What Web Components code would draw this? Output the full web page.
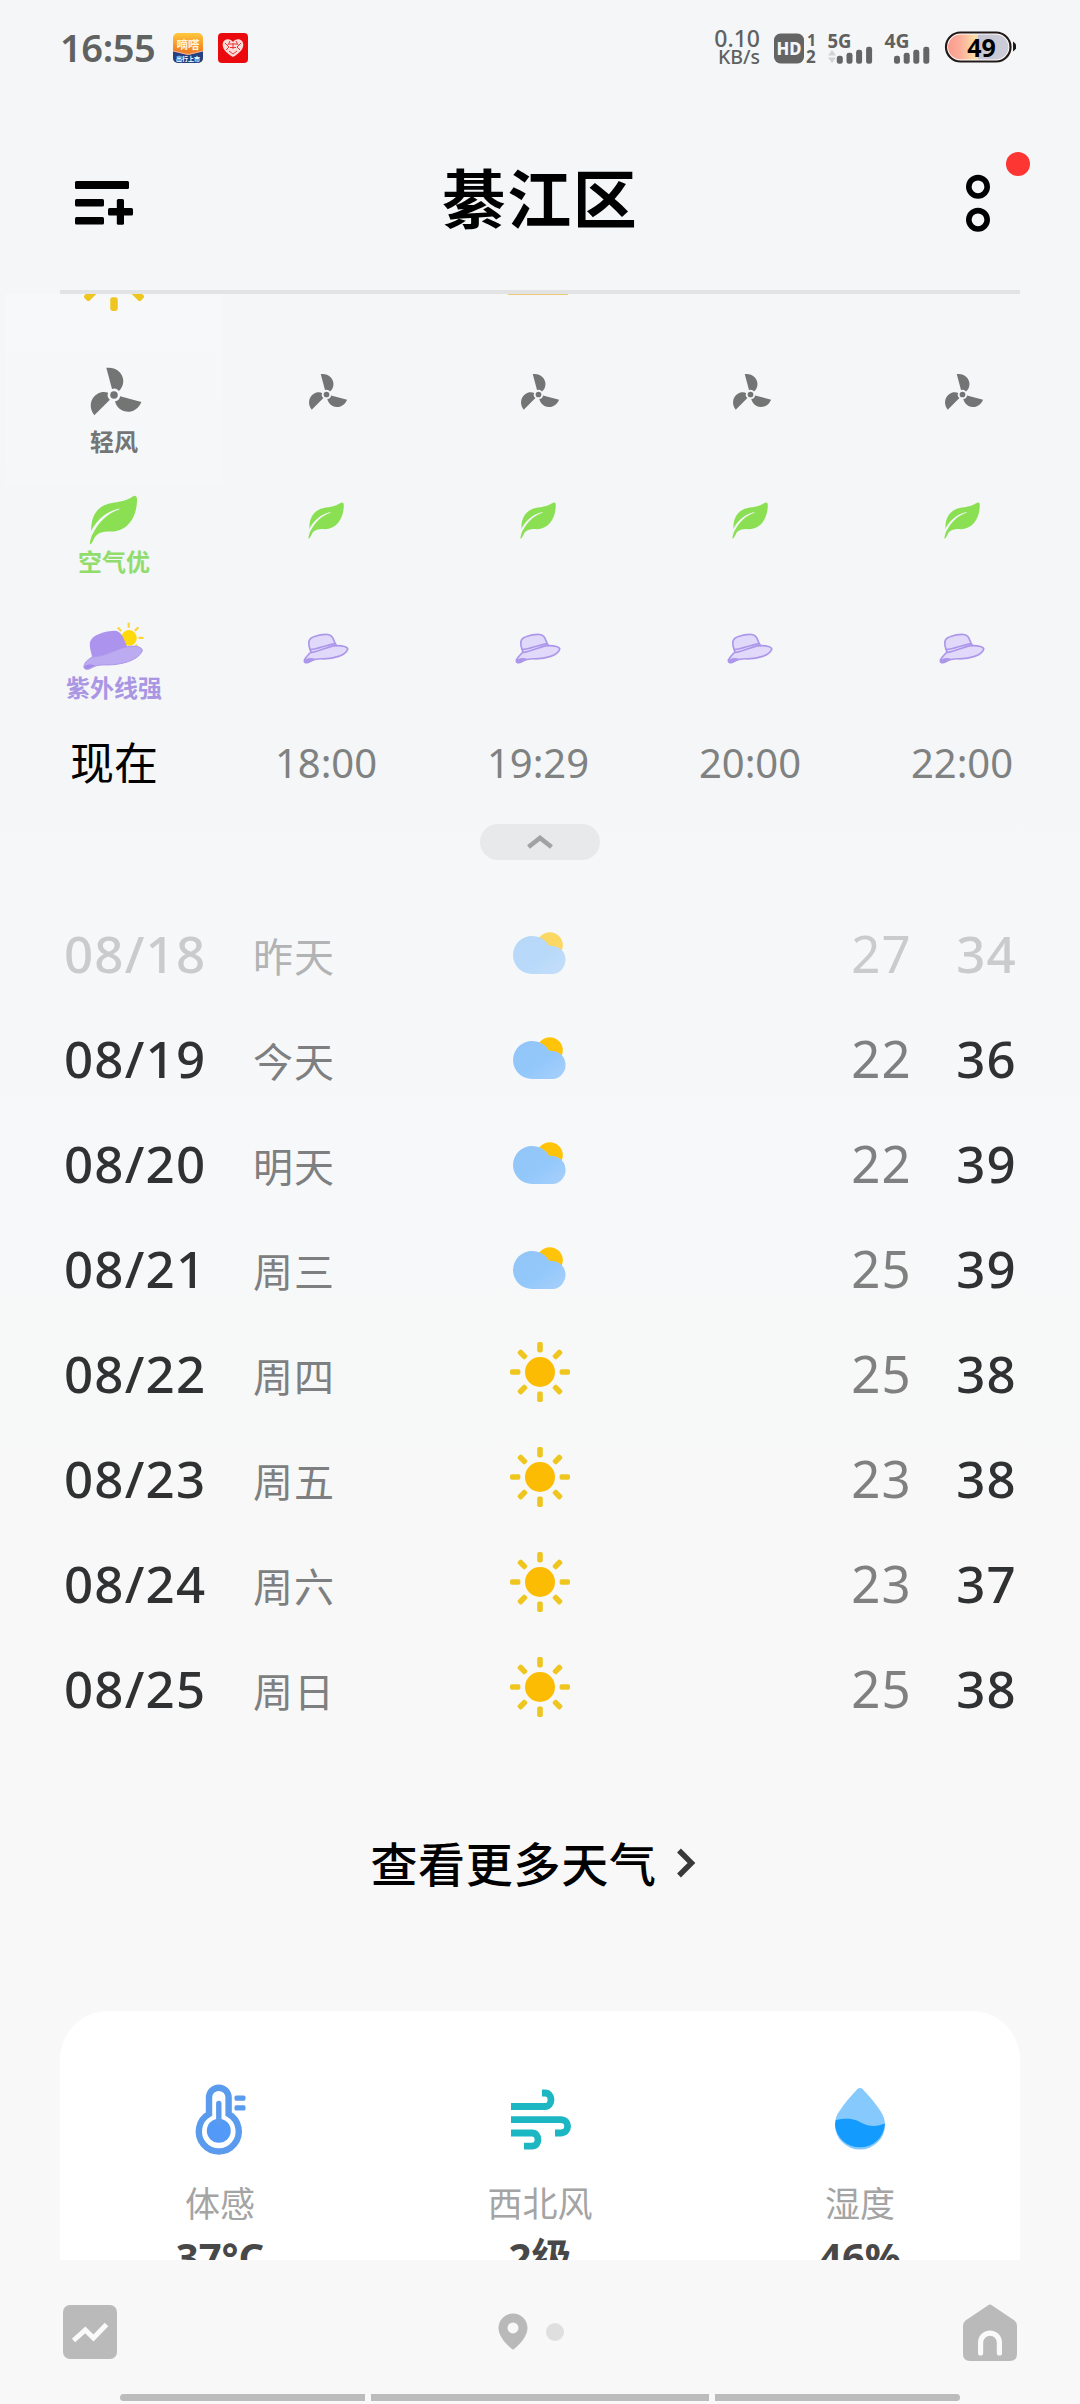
<!DOCTYPE html>
<html lang="zh-CN">
<head>
<meta charset="UTF-8">
<meta name="viewport" content="width=device-width, initial-scale=1.0">
<title>綦江区</title>
<style>
  html, body { margin: 0; padding: 0; }
  body {
    width: 1080px;
    height: 2404px;
    overflow: hidden;
    background: linear-gradient(180deg, #f4f6f8 0, #f4f6f8 820px, #f6f7f9 840px, #f7f8f9 1200px, #f8f8f8 1500px, #f8f8f8 100%);
    font-family: "Noto Sans", "Noto Sans CJK SC", sans-serif;
    color: #000;
  }
</style>
</head>
<body>
<weather-app></weather-app>

<script>
const BLADE = 'M-7.7 -27.2C2 -28.5 9.3 -22 9.3 -14C9.3 -9.5 7.3 -6.2 4.8 -4A5.9 5.9 0 0 0 -2 -5.9Z';

// All icons live here, keyed by name
const ICONS = {
  fan: `<svg viewBox="-30 -30 60 60"><g fill="#737575">
    <circle r="3.8"/>
    <path d="${BLADE}"/>
    <path transform="rotate(120)" d="${BLADE}"/>
    <path transform="rotate(240)" d="${BLADE}"/>
  </g></svg>`,
  leaf: `<svg viewBox="-5 -5 60 60">
    <path fill="#8ae052" d="M47 1.2Q48.3 2.5 48 6C47.5 24 37 37 22 36.5C13 36.4 9 38 6 42C4 45 3.5 48.2 1.5 49.3L.8 48.4C1.5 44 2.6 41 3.6 38.5L2.2 36C1.8 20 9 10 24 7.8C35 6.3 39 4.5 43 2Q45.8 .2 47 1.2Z"/>
    <path fill="#f4f6f8" d="M30.3 13.6L30.3 14.5C19 18 10 26.5 3.4 39.4L2 36C9 23.5 18 16.5 30.3 13.6Z"/>
  </svg>`,
  hat: `<svg viewBox="-7.5 -16.3 60 60"><g fill="#e1d9fa" stroke="#ad97ea" stroke-width="1.7" stroke-linejoin="round" stroke-linecap="round">
    <path d="M7.5 18.5C3.5 9 5 5 11 3.2C16 1.5 20 1 24 1.2C31 2 29.5 8.5 33 12.3C39 12.2 44.5 13.5 44.2 16C42 22.5 30 25.3 20.5 25.5C14 25.2 10.5 25.5 6 28.5C3.5 30.2 .2 29.6 1 26.6C2 23.8 5 21.5 7.5 18.5Z"/>
    <path fill="none" d="M6.7 16.2C15 15.8 22 11.5 31.5 10.5M7.5 19.2C16 18 24 13 33 12.3"/>
    <path fill="#ad97ea" d="M2 26.8C4 25.3 7 25.2 10 25.8L5 28.7C3 29.5 1 28.8 2 26.8Z"/>
  </g></svg>`,
  hatSun: `<svg viewBox="1 -5.5 60 60">
    <path fill="none" stroke="#fbd53c" stroke-width="2.2" d="M45.7 .3V5.2M34.8 5L38.2 8.6M51.8 8.4L55.5 4.7M55.5 15.3H60.5M52.5 22.3L54.5 24.6"/>
    <circle cx="46" cy="15.4" r="7.8" fill="#ffd90c"/>
    <path fill="#ab93ee" d="M9 35C9 31 6.8 28 6.8 21.5C7 13.5 19 9 31 8.2C39 8.4 40 15 44.4 24.5L32 32Z"/>
    <path fill="#bdabf2" stroke="#ae98ea" stroke-width="1" d="M1 43.5C1.5 39.5 5.5 36.5 9.5 34.5C25 33.5 36 24.3 49 23.6C56 23.6 59.5 25.5 59.3 28.5C55 38 39 42.3 24 42.5C17 42.1 12.5 42.8 7.5 46C4 47.6 .3 47 1 43.5Z"/>
    <path fill="#a58be8" d="M1.5 43.8C4 41.8 8 41.5 12 42.8L7 45.6C4 47 1.2 46.5 1.5 43.8Z"/>
  </svg>`,
  sun: `<svg viewBox="-30 -30 60 60">
    <circle r="15" fill="#fdbc04"/>
    <g fill="#eec61f">${[0, 45, 90, 135, 180, 225, 270, 315].map(a =>
      `<rect x="-2.8" y="-30" width="5.6" height="10.4" rx="1.8" transform="rotate(${a})"/>`).join('')}</g>
  </svg>`,
  cloud: `<svg viewBox="-27 -27 54 54">
    <defs><linearGradient id="c" x1="0" y1="0" x2="1" y2="1"><stop offset="0" stop-color="#93c5f7"/><stop offset=".55" stop-color="#93c8fb"/><stop offset="1" stop-color="#a8d0fb"/></linearGradient></defs>
    <circle cx="9.8" cy="-9.8" r="13" fill="#ffc40a"/>
    <path fill="url(#c)" d="M-8 -19C-.5 -19 6 -15 9.3 -9.1A13.6 13.6 0 0 1 13.4 19H-8A19 19 0 0 1 -8 -19Z"/>
  </svg>`,
  therm: `<svg width="50" height="72" viewBox="0 0 50 72">
    <path fill="none" stroke="#5b9bee" stroke-width="6.4" d="M14 31V14.5a9.8 9.8 0 0 1 19.6 0V31A20 20 0 1 1 14 31Z"/>
    <circle cx="23.8" cy="47.8" r="12" fill="#5299f8"/>
    <path stroke="#5b9bee" stroke-width="5.4" stroke-linecap="round" d="M23.8 20.5V40"/>
    <g fill="#5b9bee"><rect x="39.5" y="12.5" width="11" height="5.2" rx="1.6"/><rect x="39.5" y="22.3" width="11" height="5.2" rx="1.6"/></g>
  </svg>`,
  wind: `<svg width="60" height="62" viewBox="0 0 60 62"><path fill="none" stroke="#1cb7c3" stroke-width="6.8" stroke-linejoin="round"
    d="M1 18.5H35C43 18.5 43 5 35 5H32M1 31.6H50.5C60 31.6 60 45 50.5 45H45M1 45H22C30 45 30 58.2 22 58.2H14"/></svg>`,
  drop: `<svg width="52" height="64" viewBox="0 0 52 64">
    <path fill="#86c9fd" d="M23.7 1.8Q26 .2 28.3 1.8C36 10 42 17 46.5 24A25 25 0 0 1 51 38A25 24.5 0 0 1 1 38C1 32 2.5 28 5.5 24C10 17 16 10 23.7 1.8Z"/>
    <path fill="#139bfe" d="M1.8 33C10 31.3 17 31 23 33.6C31 38 38 41.5 50.8 36.5V38A25 24.5 0 0 1 1 38Z"/>
  </svg>`,
  menu: `<svg width="60" height="46" viewBox="0 0 60 46"><g fill="#000">
    <rect x="0" y="1" width="54" height="8" rx="1.5"/><rect x="0" y="19" width="29" height="7.6" rx="1.5"/><rect x="0" y="37" width="29" height="7.6" rx="1.5"/>
    <rect x="33" y="28" width="25" height="7.6" rx="1.5"/><rect x="41.8" y="19" width="7.2" height="25.8" rx="1.5"/>
  </g></svg>`,
  dots: `<svg width="26" height="60" viewBox="0 0 26 60"><g fill="none" stroke="#000" stroke-width="5.6"><circle cx="13" cy="12.8" r="9.2"/><circle cx="13" cy="45.8" r="9.2"/></g></svg>`,
  trend: `<svg width="54" height="54" viewBox="0 0 54 54"><rect width="54" height="54" rx="7" fill="#bababa"/><path d="M10.5 35.5L22.3 25L30.5 33L43.5 19.5" fill="none" stroke="#fafafa" stroke-width="5"/></svg>`,
  pin: `<svg width="30" height="38" viewBox="0 0 30 38"><path fill="#b9b9b9" fill-rule="evenodd" d="M15 .5A14.5 14.5 0 0 1 29.5 15C29.5 23 22 31.5 15 36.8C8 31.5 .5 23 .5 15A14.5 14.5 0 0 1 15 .5ZM15 9.4a5.5 5.5 0 1 0 0 11a5.5 5.5 0 1 0 0-11Z"/></svg>`,
  home: `<svg width="54" height="57" viewBox="0 0 54 57"><path fill="#bababa" d="M25.2 1.2Q27 -.2 28.8 1.2L51.5 16.5Q54 18.5 54 22V50Q54 57 47 57H7Q0 57 0 50V22Q0 18.5 2.5 16.5Z"/><path d="M17.6 49V38.5a9.4 9.4 0 0 1 18.8 0V49" fill="none" stroke="#fafafa" stroke-width="5.2" stroke-linecap="round"/></svg>`
};

class WeatherIcon extends HTMLElement {
  connectedCallback() {
    this.attachShadow({ mode: 'open' }).innerHTML = `
      <style>
        :host { display: block; line-height: 0; flex: none; }
        svg { display: block; overflow: visible; }
        svg:not([width]) { width: 100%; height: 100%; }
      </style>${ICONS[this.getAttribute('name')]}`;
  }
}
customElements.define('weather-icon', WeatherIcon);

class StatusBar extends HTMLElement {
  connectedCallback() {
    const bars = `<g fill="#656565"><rect x="0" y="9" width="6" height="8" rx="2.4"/><rect x="9.7" y="6" width="6" height="11" rx="2.4"/><rect x="19.3" y="3" width="6" height="14" rx="2.4"/><rect x="29.3" y="0" width="6" height="17" rx="2.4"/></g>`;
    this.attachShadow({ mode: 'open' }).innerHTML = `
      <style>
        :host { display: flex; align-items: center; height: 96px; padding: 0 64px 0 60px; box-sizing: border-box; color: #606262; }
        .time { font-size: 38px; font-weight: 600; line-height: 40px; width: 113px; letter-spacing: -.4px; white-space: nowrap; padding-bottom: 3px; }
        .apps { display: flex; gap: 15px; }
        .right { margin-left: auto; display: flex; align-items: center; }
        .speed { width: 46px; text-align: right; font-weight: 500; white-space: nowrap; }
        .speed div { font-size: 23px; line-height: 18px; }
        .speed div + div { font-size: 19.5px; line-height: 20px; }
        svg { display: block; }
        text { font-family: "Noto Sans", "Noto Sans CJK SC", sans-serif; }
      </style>
      <div class="time">16:55</div>
      <div class="apps">
        <svg width="30" height="30" viewBox="0 0 30 30">
          <defs><linearGradient id="o" x1="0" y1="0" x2="0" y2="1"><stop offset="0" stop-color="#ffc83e"/><stop offset=".6" stop-color="#f08023"/></linearGradient>
          <clipPath id="k"><rect width="30" height="30" rx="5"/></clipPath></defs>
          <g clip-path="url(#k)"><rect width="30" height="30" fill="url(#o)"/>
          <path d="M0 18L15 22L30 18V30H0Z" fill="#24407f"/><path d="M0 18L15 21.5L30 18" fill="none" stroke="#f4b2a0" stroke-width="1.2"/>
          <text x="15" y="16" text-anchor="middle" font-size="11.5" font-weight="700" fill="#fff4d8">嘀嗒</text>
          <text x="15" y="28.2" text-anchor="middle" font-size="6" font-weight="700" fill="#fff">出行上市</text></g>
        </svg>
        <svg width="30" height="30" viewBox="0 0 30 30">
          <rect width="30" height="30" rx="4" fill="#ea0a0d"/>
          <path d="M15 24C9 20.5 4.5 16.5 4.7 11.5C5 6 12 4.5 15 9C18 4.5 25 6 25.3 11.5C25.5 16.5 21 20.5 15 24Z" fill="#fbdcd8"/>
          <path fill="none" stroke="#e6383a" d="M7 10l4 4l-3 3M12 8l-2 4M23 10l-4 4l3 3M18 8l2 4M11 11h8M12 14.5h6M15 10v6M11 18l4 3l4-3"/>
        </svg>
      </div>
      <div class="right">
        <div class="speed"><div>0.10</div><div>KB/s</div></div>
        <svg width="256" height="40" viewBox="760 27.500 256 40">
          <rect x="774" y="33" width="30" height="30" rx="6.5" fill="#646464"/>
          <text x="776.5" y="54.5" font-size="18" font-weight="800" fill="#f4f6f8" textLength="25" lengthAdjust="spacingAndGlyphs">HD</text>
          <g fill="#606060" font-weight="700">
            <text x="807" y="45" font-size="16">1</text><text x="806" y="62.5" font-size="17">2</text>
            <text x="827.5" y="47" font-size="19" textLength="24" lengthAdjust="spacingAndGlyphs">5G</text>
            <text x="884.5" y="47" font-size="19" textLength="25" lengthAdjust="spacingAndGlyphs">4G</text>
          </g>
          <path d="M828 55L832 49.5L836 55ZM828 57L832 62.5L836 57Z" fill="#d2d3d4"/>
          <g transform="translate(836.8 46.3)">${bars}</g>
          <g transform="translate(894 46.3)">${bars}</g>
          <defs><linearGradient id="g"><stop offset="0" stop-color="#fb9a8e"/><stop offset=".2" stop-color="#fbae9b"/><stop offset=".44" stop-color="#fbdca6"/><stop offset=".5" stop-color="#f0dcb4"/><stop offset=".5" stop-color="#c6c6d3"/><stop offset="1" stop-color="#cdcdda"/></linearGradient></defs>
          <rect x="946" y="32" width="64.5" height="29" rx="14.5" fill="#fff" stroke="#231a18" stroke-width="2.2"/>
          <rect x="948" y="34" width="60.5" height="25" rx="12.5" fill="url(#g)"/>
          <path d="M1013 41Q1020 46 1013 51Z" fill="#231a18"/>
          <text x="981.5" y="56" font-size="25" font-weight="700" text-anchor="middle" fill="#000">49</text>
        </svg>
      </div>`;
  }
}
customElements.define('status-bar', StatusBar);

class CityHeader extends HTMLElement {
  connectedCallback() {
    this.attachShadow({ mode: 'open' }).innerHTML = `
      <style>
        :host { display: flex; flex-direction: column; height: 198px; }
        .row { height: 194px; padding: 0 89px 0 75px; box-sizing: border-box; display: flex; align-items: flex-start; justify-content: space-between; }
        .menu { margin-top: 84px; }
        .more { margin-top: 78px; position: relative; }
        .badge { position: absolute; left: 40.5px; top: -22px; width: 24px; height: 24px; border-radius: 50%; background: #fd3634; }
        h1 { margin: 58px 20px 0 0; font-size: 64px; line-height: 90px; font-weight: 700; letter-spacing: 1.5px; }
        .line { height: 4px; margin: 0 60px; background: #e1e3e4; }
      </style>
      <div class="row">
        <weather-icon class="menu" name="menu"></weather-icon>
        <h1><slot></slot></h1>
        <div class="more"><weather-icon name="dots"></weather-icon><div class="badge"></div></div>
      </div>
      <div class="line"></div>`;
  }
}
customElements.define('city-header', CityHeader);

// One column of the hourly strip; the "now" column is larger and labelled
class HourColumn extends HTMLElement {
  connectedCallback() {
    const now = this.hasAttribute('now');
    const label = (cls, text) => now ? `<span class="${cls}">${text}</span>` : '';
    this.attachShadow({ mode: 'open' }).innerHTML = `
      <style>
        :host { display: flex; flex-direction: column; align-items: center; width: 212px; flex: none;
          --s: ${now ? 60 : 45}px; }
        .sky { height: 75.5px; flex: none; overflow: hidden; }
        .sky weather-icon { width: 80px; height: 80px; margin-top: -63px; }
        .sky i { display: block; width: 60px; height: 1px; background: #eccb78; }
        .cell { display: flex; flex-direction: column; align-items: center; flex: none; }
        .wind { height: 125.5px; }
        .air { height: 127px; }
        .uv { height: 116px; }
        .box { height: 50px; display: flex; align-items: center; justify-content: center; }
        .box weather-icon { width: var(--s); height: var(--s); }
        .uv weather-icon { width: 60px; height: 60px; }
        span { font-size: 24px; line-height: 24px; font-weight: 700; white-space: nowrap; }
        .w { color: #747575; margin-top: 10px; }
        .a { color: #92dc6b; margin-top: 5px; }
        .u { color: #aa96e3; margin-top: 3.5px; }
        .time { line-height: 50px; font-size: ${now ? 44 : 40}px; color: ${now ? '#000' : '#808181'}; }
      </style>
      <div class="sky">${now ? '<weather-icon name="sun"></weather-icon>' : this.hasAttribute('sunset') ? '<i></i>' : ''}</div>
      <div class="cell wind"><div class="box"><weather-icon name="fan"></weather-icon></div>${label('w', '轻风')}</div>
      <div class="cell air"><div class="box"><weather-icon name="leaf"></weather-icon></div>${label('a', '空气优')}</div>
      <div class="cell uv"><div class="box"><weather-icon name="${now ? 'hatSun' : 'hat'}"></weather-icon></div>${label('u', '紫外线强')}</div>
      <div class="time"><slot></slot></div>`;
  }
}
customElements.define('hour-column', HourColumn);

class DayRow extends HTMLElement {
  connectedCallback() {
    const [date, day, icon, low, high] = ['date', 'day', 'icon', 'low', 'high'].map(k => this.getAttribute(k));
    this.attachShadow({ mode: 'open' }).innerHTML = `
      <style>
        :host { display: grid; grid-template-columns: 190px 207px 160px 1fr 105px; align-items: center; height: 105px; font-size: 51px; line-height: 60px; }
        .date, .low, .high { padding-bottom: 4px; letter-spacing: 1.2px; }
        .date { color: #303132; font-weight: 500; padding-left: 1px; }
        .day { color: #7e7f80; font-size: 40px; padding-top: 4px; letter-spacing: 1px; }
        weather-icon { width: 60px; height: 60px; justify-self: center; margin-top: -5px; }
        weather-icon[name="cloud"] { width: 54px; height: 54px; margin-top: 1px; }
        .low, .high { text-align: right; }
        .low { color: #808080; }
        .high { color: #303132; font-weight: 500; }
        :host([past]) .date, :host([past]) .low, :host([past]) .high { color: #cacbcc; }
        :host([past]) .day { color: #b2b3b4; }
        :host([past]) weather-icon { opacity: .62; }
      </style>
      <div class="date">${date}</div>
      <div class="day">${day}</div>
      <weather-icon name="${icon}"></weather-icon>
      <div class="low">${low}</div>
      <div class="high">${high}</div>`;
  }
}
customElements.define('day-row', DayRow);

class DetailItem extends HTMLElement {
  connectedCallback() {
    this.attachShadow({ mode: 'open' }).innerHTML = `
      <style>
        :host { display: flex; flex-direction: column; align-items: center; flex: 1; padding-top: 72px; }
        .icon { height: 72px; display: flex; align-items: center; }
        .label { margin-top: 24px; font-size: 35px; line-height: 50px; color: #a4a4a4; }
        .value { margin-top: 0; font-size: 40px; line-height: 56px; font-weight: 700; color: #484848; white-space: nowrap; }
      </style>
      <div class="icon"><weather-icon name="${this.getAttribute('icon')}"></weather-icon></div>
      <div class="label">${this.getAttribute('label')}</div>
      <div class="value"><slot></slot></div>`;
  }
}
customElements.define('detail-item', DetailItem);

class BottomNav extends HTMLElement {
  connectedCallback() {
    this.attachShadow({ mode: 'open' }).innerHTML = `
      <style>
        :host { display: flex; flex-direction: column; height: 144px; background: #f8f8f8; }
        .tabs { display: flex; justify-content: space-between; align-items: center; height: 134px; padding: 10px 63px 0; box-sizing: border-box; }
        .pages { display: flex; align-items: center; gap: 18px; padding-right: 12px; margin-right: 6px; }
        .dot { width: 18px; height: 18px; border-radius: 50%; background: #dfdfdf; }
        .gesture { display: flex; gap: 6px; margin: 0 120px; height: 7px; }
        .gesture div { flex: 245; background: #bcbcbc; }
        .gesture div:nth-child(2) { flex: 338; }
        .gesture div:first-child { border-radius: 4px 0 0 4px; }
        .gesture div:last-child { border-radius: 0 4px 4px 0; }
      </style>
      <div class="tabs">
        <weather-icon name="trend"></weather-icon>
        <div class="pages"><weather-icon name="pin"></weather-icon><div class="dot"></div></div>
        <weather-icon name="home"></weather-icon>
      </div>
      <div class="gesture"><div></div><div></div><div></div></div>`;
  }
}
customElements.define('bottom-nav', BottomNav);

class WeatherApp extends HTMLElement {
  connectedCallback() {
    this.attachShadow({ mode: 'open' }).innerHTML = `
      <style>
        :host { display: flex; flex-direction: column; width: 1080px; height: 2404px; }
        main { height: 1966px; overflow: hidden; flex: none; display: flex; flex-direction: column; }
        .hours { display: flex; height: 494px; padding-left: 8px; flex: none; background: linear-gradient(#f7f8fa, #f5f7f9) no-repeat 5px 0 / 217px 191px; }
        .fold { align-self: center; margin-top: 36px; width: 120px; height: 36px; border-radius: 18px; background: #e8e9eb; display: flex; align-items: center; justify-content: center; flex: none; }
        svg { display: block; }
        .days { margin: 42px 63px 0; flex: none; }
        .all { display: flex; justify-content: center; align-items: center; gap: 19px; margin-top: 81px; height: 76px; padding-right: 14px; font-size: 47px; font-weight: 500; letter-spacing: .7px; flex: none; }
        .all svg { margin-top: 4px; }
        .card { margin: 112px 60px 0; background: #fff; border-radius: 48px; height: 480px; display: flex; flex: none; }
      </style>
      <status-bar></status-bar>
      <city-header>綦江区</city-header>
      <main>
        <div class="hours">
          <hour-column now>现在</hour-column>
          <hour-column>18:00</hour-column>
          <hour-column sunset>19:29</hour-column>
          <hour-column>20:00</hour-column>
          <hour-column>22:00</hour-column>
        </div>
        <div class="fold"><svg width="28" height="16" viewBox="0 0 28 16"><path d="M2.5 13L14 4L25.5 13" fill="none" stroke="#a2a2a3" stroke-width="4.6"/></svg></div>
        <div class="days">
          <day-row past date="08/18" day="昨天" icon="cloud" low="27" high="34"></day-row>
          <day-row date="08/19" day="今天" icon="cloud" low="22" high="36"></day-row>
          <day-row date="08/20" day="明天" icon="cloud" low="22" high="39"></day-row>
          <day-row date="08/21" day="周三" icon="cloud" low="25" high="39"></day-row>
          <day-row date="08/22" day="周四" icon="sun" low="25" high="38"></day-row>
          <day-row date="08/23" day="周五" icon="sun" low="23" high="38"></day-row>
          <day-row date="08/24" day="周六" icon="sun" low="23" high="37"></day-row>
          <day-row date="08/25" day="周日" icon="sun" low="25" high="38"></day-row>
        </div>
        <div class="all">查看更多天气<svg width="20" height="32" viewBox="0 0 20 32"><path d="M3 3.5L15.5 16L3 28.5" fill="none" stroke="#39393b" stroke-width="5.4"/></svg></div>
        <div class="card">
          <detail-item icon="therm" label="体感">37°C</detail-item>
          <detail-item icon="wind" label="西北风">2级</detail-item>
          <detail-item icon="drop" label="湿度">46%</detail-item>
        </div>
      </main>
      <bottom-nav></bottom-nav>`;
  }
}
customElements.define('weather-app', WeatherApp);
</script>
</body>
</html>
